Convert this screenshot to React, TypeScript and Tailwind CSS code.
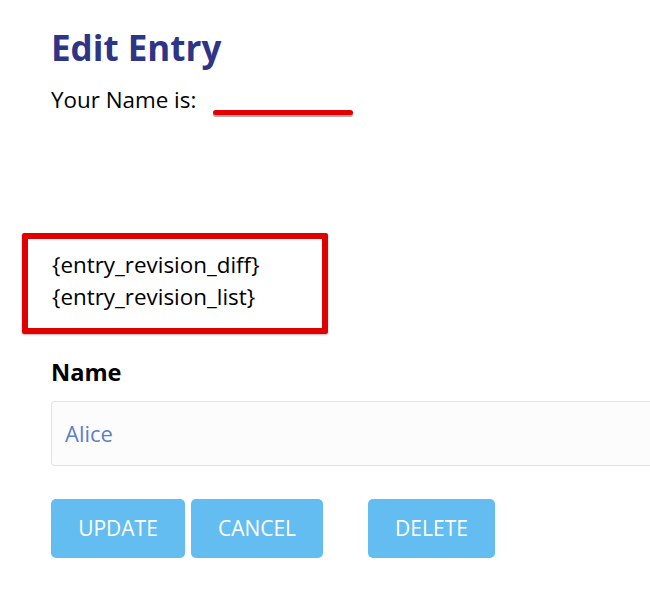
export default function App() {
  return (
    <main
      className="min-h-screen w-[650px] overflow-hidden bg-white pl-[51px] pt-[28px] text-black"
      style={{ fontFamily: '"Open Sans", sans-serif' }}
    >
      <h1 className="text-[35px] font-bold leading-[40px] text-[#2e3587]">Edit Entry</h1>
      <div className="mt-[17px] flex items-end">
        <span className="text-[22.4px] leading-[30px]">Your Name is:</span>
        <span className="ml-[17px] h-[5px] w-[140px] rounded-full bg-[#e20000] shadow-[0_2px_1px_rgba(0,0,0,0.35)]" />
      </div>

      <div className="ml-[-29px] mt-[118px] w-[306px] rounded-[2px] border-[6px] border-[#e00000] pb-[15px] pl-[24px] pt-[10px] text-[22.4px] leading-[32px] shadow-[0_1px_2px_rgba(0,0,0,0.3)]">
        <div>{"{entry_revision_diff}"}</div>
        <div>{"{entry_revision_list}"}</div>
      </div>

      <label className="mt-[22px] block text-[23.6px] font-bold leading-[32px]">Name</label>
      <div className="mt-[13px] flex h-[65px] w-[640px] items-center rounded-[3px] border border-[#e2e2e2] bg-[#fcfcfc] px-[13px]">
        <span className="text-[22px] text-[#5b7fc6]">Alice</span>
      </div>

      <div className="mt-[33px] flex">
        <button className="h-[59px] w-[134px] rounded-[5px] bg-[#63bdf0] text-[21px] text-white">UPDATE</button>
        <button className="ml-[6px] h-[59px] w-[132px] rounded-[5px] bg-[#63bdf0] text-[21px] text-white">CANCEL</button>
        <button className="ml-[45px] h-[59px] w-[127px] rounded-[5px] bg-[#63bdf0] text-[21px] text-white">DELETE</button>
      </div>
    </main>
  );
}
